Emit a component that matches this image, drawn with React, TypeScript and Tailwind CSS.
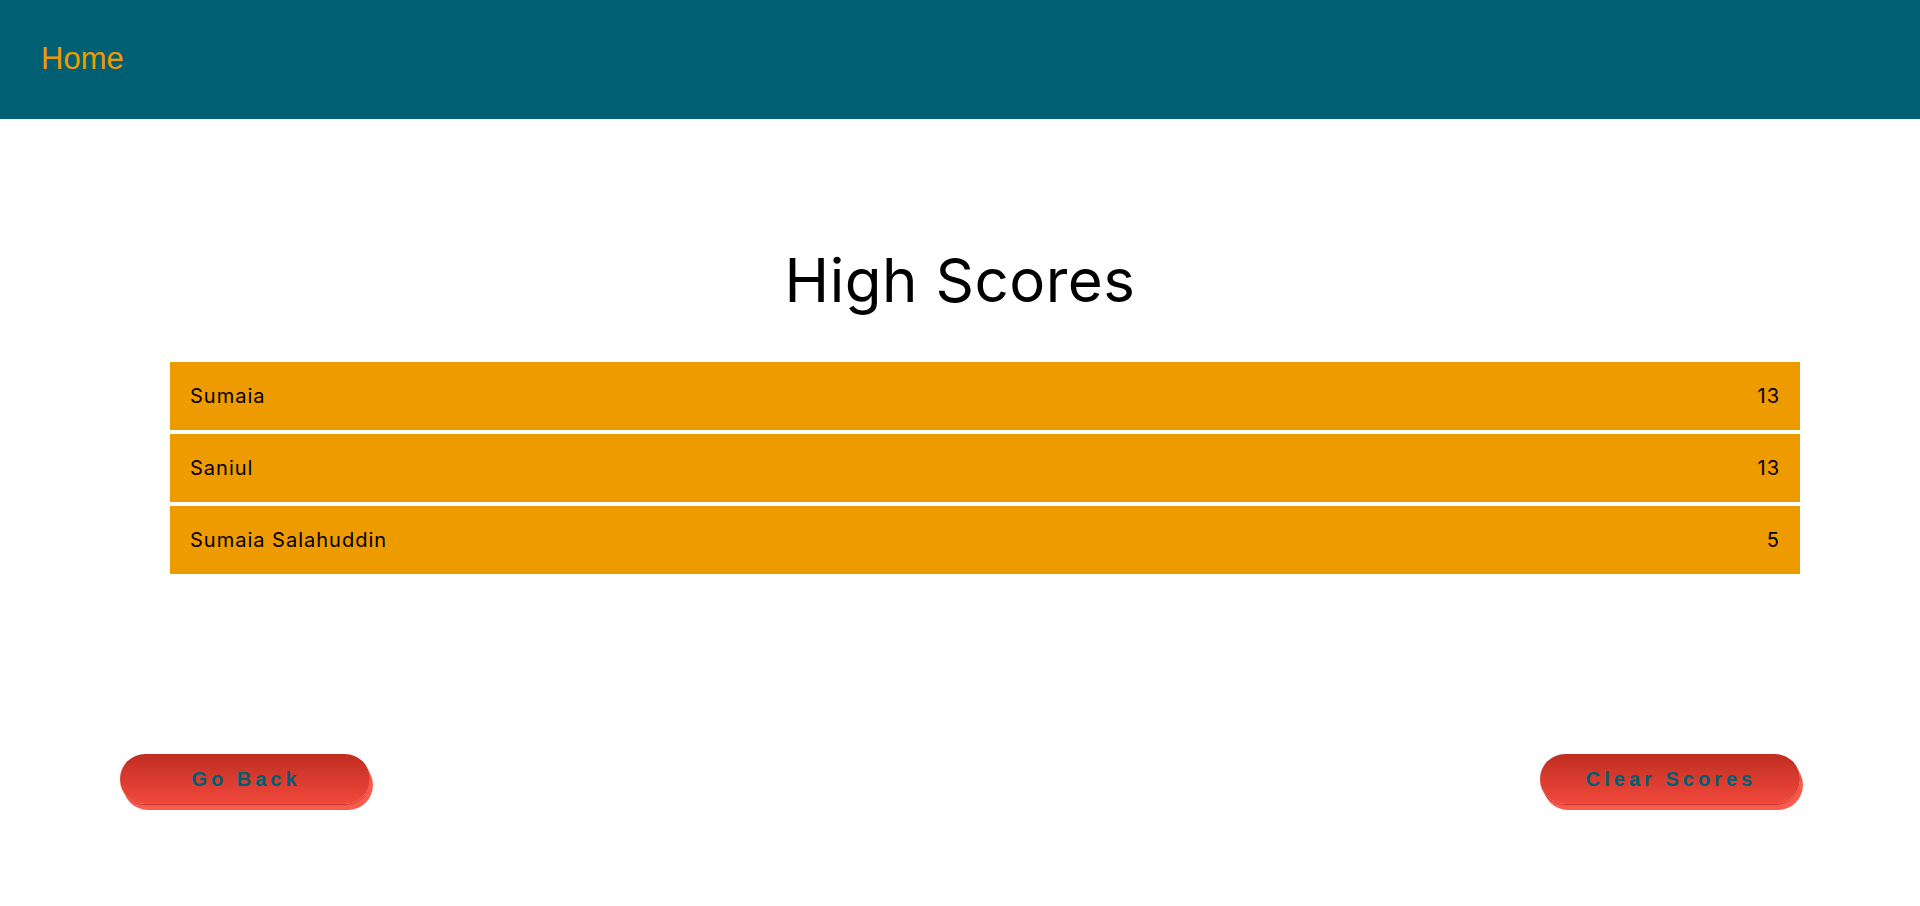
const scores = [
  { name: "Sumaia", score: 13 },
  { name: "Saniul", score: 13 },
  { name: "Sumaia Salahuddin", score: 5 },
];

function PillButton({ label, width }: { label: string; width: string }) {
  return (
    <button
      className={`${width} h-[50px] rounded-full bg-gradient-to-b from-[#c02d21] to-[#f1493c] pl-[2px] text-[20px] font-bold tracking-[4px] text-[#005f73] shadow-[0_1px_1px_rgba(120,20,10,0.45),3px_6px_0_#fb5a4e] [font-family:'Liberation_Sans',Arial,sans-serif]`}
    >
      {label}
    </button>
  );
}

export default function App() {
  return (
    <div className="min-h-[906px] bg-white [font-family:Inter,'Noto_Sans',sans-serif]">
      <header className="flex h-[119px] items-center bg-[#005f73] px-[41px]">
        <a
          href="#"
          className="text-[31px] text-[#ee9b00] [font-family:'Liberation_Sans',Arial,sans-serif]"
        >
          Home
        </a>
      </header>

      <main className="pt-[131px]">
        <h1 className="text-center text-[60px] leading-none font-normal tracking-[0.5px] text-black">
          High Scores
        </h1>

        <ul className="mt-[52px] ml-[170px] mr-[120px] flex flex-col gap-[4px]">
          {scores.map((s) => (
            <li
              key={s.name}
              className="flex h-[68px] items-center justify-between bg-[#ee9b00] px-[20px] text-[20px] tracking-[1px] text-black"
            >
              <span>{s.name}</span>
              <span>{s.score}</span>
            </li>
          ))}
        </ul>

        <div className="mt-[180px] flex justify-between px-[120px]">
          <PillButton label="Go Back" width="w-[250px]" />
          <PillButton label="Clear Scores" width="w-[260px]" />
        </div>
      </main>
    </div>
  );
}
